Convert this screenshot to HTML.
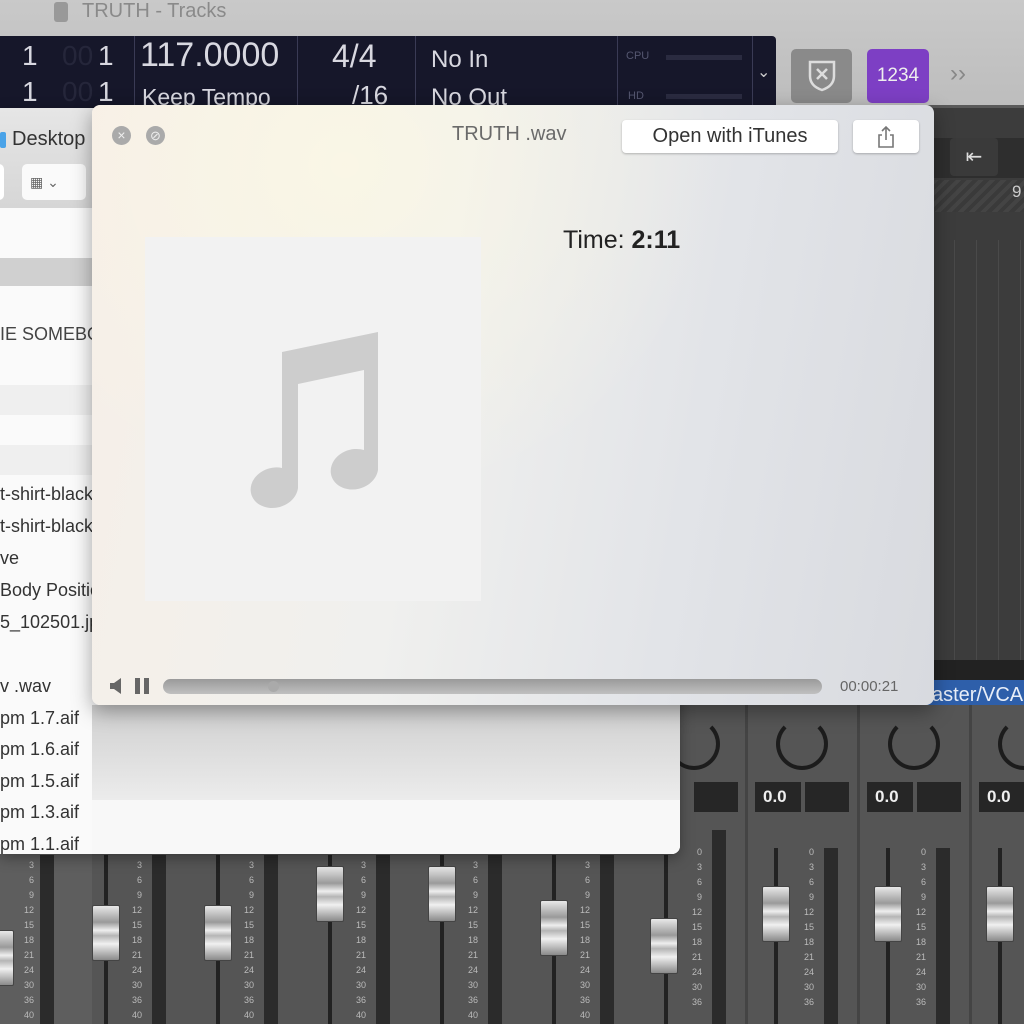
<!DOCTYPE html>
<html><head><style>
*{margin:0;padding:0;box-sizing:border-box}
html,body{width:1024px;height:1024px;overflow:hidden}
body{position:relative;background:#5a5a5a;font-family:"Liberation Sans",sans-serif}
.a{position:absolute}
.strip{position:absolute;top:700px;width:112px;height:324px;background:#5e5e5e}
.dv{position:absolute;top:0;width:14px;height:170px;background:#2b2b2b}
.trk{position:absolute;top:150px;width:4px;height:180px;background:#222}
.cap{position:absolute;width:28px;height:56px;border-radius:2px;background:linear-gradient(#e8e8e8,#9a9a9a 30%,#eee 45%,#b5b5b5 55%,#f0f0f0 70%,#8a8a8a);border:1px solid #444}
.sc{position:absolute;font-size:9px;color:#bbb;line-height:15px;width:14px;text-align:right}
.knob{position:absolute;top:718px;width:52px;height:52px;border-radius:50%;border:4px solid #1c1c1c;border-top-color:transparent;background:#555}
.val{position:absolute;top:782px;width:46px;height:30px;background:#262626;color:#eee;font-size:17px;font-weight:bold;line-height:30px;padding-left:8px}
.valb{position:absolute;top:782px;width:44px;height:30px;background:#262626}
.row{position:absolute;left:0;width:95px;font-size:18px;color:#333;white-space:nowrap;overflow:hidden}
</style></head><body>
<div class="a" style="left:0;top:0;width:1024px;height:105px;background:linear-gradient(#c9c9c9,#bdbdbd)"></div>
<div class="a" style="left:54px;top:2px;width:14px;height:20px;background:#999;border-radius:3px"></div>
<div class="a" style="left:82px;top:0;font-size:20px;color:#8a8a8a">TRUTH - Tracks</div>
<div class="a" style="left:0;top:36px;width:776px;height:72px;background:#16172a;border-radius:0 4px 0 0"></div>
<div class="a" style="left:0;top:36px;width:135px;height:72px;color:#d8d8e0;font-size:28px">
 <div class="a" style="left:22px;top:4px">1</div><div class="a" style="left:98px;top:4px">1</div>
 <div class="a" style="left:22px;top:40px">1</div><div class="a" style="left:98px;top:40px">1</div>
 <div class="a" style="left:62px;top:4px;color:#25263a">00</div><div class="a" style="left:62px;top:40px;color:#25263a">00</div>
</div>
<div class="a" style="left:134px;top:36px;width:1px;height:72px;background:#3a3b55"></div>
<div class="a" style="left:140px;top:36px;font-size:34px;color:#d8d8e0">117.0000</div>
<div class="a" style="left:142px;top:84px;font-size:23px;color:#d8d8e0">Keep Tempo</div>
<div class="a" style="left:297px;top:36px;width:1px;height:72px;background:#3a3b55"></div>
<div class="a" style="left:332px;top:38px;font-size:32px;color:#d8d8e0">4/4</div>
<div class="a" style="left:352px;top:80px;font-size:26px;color:#d8d8e0">/16</div>
<div class="a" style="left:415px;top:36px;width:1px;height:72px;background:#3a3b55"></div>
<div class="a" style="left:431px;top:46px;font-size:24px;color:#d8d8e0">No In</div>
<div class="a" style="left:431px;top:84px;font-size:24px;color:#d8d8e0">No Out</div>
<div class="a" style="left:617px;top:36px;width:1px;height:72px;background:#3a3b55"></div>
<div class="a" style="left:626px;top:50px;font-size:11px;color:#555770">CPU</div>
<div class="a" style="left:628px;top:90px;font-size:11px;color:#555770">HD</div>
<div class="a" style="left:666px;top:55px;width:76px;height:5px;background:#2a2b40"></div>
<div class="a" style="left:666px;top:94px;width:76px;height:5px;background:#2a2b40"></div>
<div class="a" style="left:752px;top:36px;width:1px;height:72px;background:#3a3b55"></div>
<div class="a" style="left:757px;top:62px;font-size:16px;color:#ccc">&#8964;</div>
<div class="a" style="left:791px;top:49px;width:61px;height:54px;background:#8a8a8a;border-radius:5px"></div>
<svg class="a" style="left:806px;top:58px" width="32" height="34"><path d="M4 4 H28 V18 Q28 28 16 32 Q4 28 4 18 Z" fill="none" stroke="#ddd" stroke-width="2.5"/><path d="M11 11 L21 21 M21 11 L11 21" stroke="#ddd" stroke-width="2.5"/></svg>
<div class="a" style="left:867px;top:49px;width:62px;height:54px;background:#7d3fc4;border-radius:5px;color:#eee;font-size:19px;text-align:center;line-height:54px">1234</div>
<div class="a" style="left:950px;top:60px;font-size:24px;color:#888">&rsaquo;&rsaquo;</div>
<div class="a" style="left:933px;top:108px;width:91px;height:555px;background:#3c3c3c"></div>
<div class="a" style="left:933px;top:138px;width:91px;height:40px;background:#2e2e2e"></div>
<div class="a" style="left:950px;top:138px;width:48px;height:38px;background:#3a3a3a;border-radius:4px;color:#ddd;font-size:20px;text-align:center;line-height:38px">&#8676;</div>
<div class="a" style="left:933px;top:180px;width:91px;height:32px;background:repeating-linear-gradient(135deg,#444 0 4px,#3a3a3a 4px 8px)"></div>
<div class="a" style="left:1012px;top:182px;font-size:17px;color:#ccc">9</div>
<div class="a" style="left:933px;top:240px;width:91px;height:420px;background:repeating-linear-gradient(90deg,#3c3c3c 0 21px,#4a4a4a 21px 22px)"></div>
<div class="a" style="left:933px;top:660px;width:91px;height:50px;background:#222"></div>
<div class="a" style="left:920px;top:680px;width:104px;height:30px;background:#2e5faa;color:#e8eef8;font-size:20px;line-height:30px;padding-left:12px">aster/VCA</div>
<div class="a" style="left:0;top:705px;width:1024px;height:319px;background:#555"></div>
<div class="strip" style="left:-20px"></div>
<div class="dv" style="left:40px;top:855px"></div><div class="dv" style="left:152px;top:855px"></div><div class="dv" style="left:264px;top:855px"></div><div class="dv" style="left:376px;top:855px"></div><div class="dv" style="left:488px;top:855px"></div><div class="dv" style="left:600px;top:855px"></div>
<div class="a" style="left:712px;top:830px;width:14px;height:194px;background:#2b2b2b"></div>
<div class="a" style="left:824px;top:848px;width:14px;height:176px;background:#2b2b2b"></div>
<div class="a" style="left:936px;top:848px;width:14px;height:176px;background:#2b2b2b"></div>
<div class="a" style="left:745px;top:705px;width:3px;height:319px;background:#444"></div>
<div class="a" style="left:857px;top:705px;width:3px;height:319px;background:#444"></div>
<div class="a" style="left:969px;top:705px;width:3px;height:319px;background:#444"></div>
<div class="trk" style="left:104px;top:855px;height:169px"></div><div class="trk" style="left:216px;top:855px;height:169px"></div><div class="trk" style="left:328px;top:855px;height:169px"></div><div class="trk" style="left:440px;top:855px;height:169px"></div><div class="trk" style="left:552px;top:855px;height:169px"></div><div class="trk" style="left:664px;top:855px;height:169px"></div><div class="trk" style="left:774px;top:848px;height:176px"></div><div class="trk" style="left:886px;top:848px;height:176px"></div><div class="trk" style="left:998px;top:848px;height:176px"></div>
<div class="sc" style="left:128px;top:858px">3<br>6<br>9<br>12<br>15<br>18<br>21<br>24<br>30<br>36<br>40</div>
<div class="sc" style="left:240px;top:858px">3<br>6<br>9<br>12<br>15<br>18<br>21<br>24<br>30<br>36<br>40</div>
<div class="sc" style="left:352px;top:858px">3<br>6<br>9<br>12<br>15<br>18<br>21<br>24<br>30<br>36<br>40</div>
<div class="sc" style="left:464px;top:858px">3<br>6<br>9<br>12<br>15<br>18<br>21<br>24<br>30<br>36<br>40</div>
<div class="sc" style="left:576px;top:858px">3<br>6<br>9<br>12<br>15<br>18<br>21<br>24<br>30<br>36<br>40</div>
<div class="sc" style="left:20px;top:858px">3<br>6<br>9<br>12<br>15<br>18<br>21<br>24<br>30<br>36<br>40</div>
<div class="sc" style="left:688px;top:845px">0<br>3<br>6<br>9<br>12<br>15<br>18<br>21<br>24<br>30<br>36</div>
<div class="sc" style="left:800px;top:845px">0<br>3<br>6<br>9<br>12<br>15<br>18<br>21<br>24<br>30<br>36</div>
<div class="sc" style="left:912px;top:845px">0<br>3<br>6<br>9<br>12<br>15<br>18<br>21<br>24<br>30<br>36</div>
<div class="cap" style="left:-14px;top:930px"></div>
<div class="cap" style="left:92px;top:905px"></div><div class="cap" style="left:204px;top:905px"></div><div class="cap" style="left:316px;top:866px"></div><div class="cap" style="left:428px;top:866px"></div><div class="cap" style="left:540px;top:900px"></div><div class="cap" style="left:650px;top:918px"></div><div class="cap" style="left:762px;top:886px"></div><div class="cap" style="left:874px;top:886px"></div><div class="cap" style="left:986px;top:886px"></div>
<div class="knob" style="left:668px"></div><div class="knob" style="left:776px"></div><div class="knob" style="left:888px"></div><div class="knob" style="left:998px"></div>
<div class="valb" style="left:694px"></div>
<div class="val" style="left:755px">0.0</div><div class="valb" style="left:805px"></div>
<div class="val" style="left:867px">0.0</div><div class="valb" style="left:917px"></div>
<div class="val" style="left:979px">0.0</div>
<div class="a" style="left:0;top:108px;width:680px;height:746px;background:#fafafa;border-radius:0 0 8px 0;box-shadow:0 4px 14px rgba(0,0,0,.35)"></div>
<div class="a" style="left:0;top:108px;width:680px;height:100px;background:linear-gradient(#e6e6e6,#d6d6d6)"></div>
<div class="a" style="left:0;top:132px;width:6px;height:16px;background:#4aa3e8;border-radius:2px"></div>
<div class="a" style="left:12px;top:128px;font-size:20px;color:#333">Desktop</div>
<div class="a" style="left:-10px;top:164px;width:14px;height:36px;background:#fff;border-radius:5px"></div>
<div class="a" style="left:22px;top:164px;width:64px;height:36px;background:#fafafa;border-radius:5px;font-size:14px;color:#666;line-height:36px;padding-left:8px">&#9638; &#8964;</div>
<div class="a" style="left:0;top:258px;width:95px;height:28px;background:#d0d0d0"></div>
<div class="a" style="left:0;top:385px;width:95px;height:30px;background:#efefef"></div>
<div class="a" style="left:0;top:445px;width:95px;height:30px;background:#efefef"></div>
<div class="row" style="top:324px;color:#444">IE SOMEBODY</div>
<div class="row" style="top:484px">t-shirt-black</div>
<div class="row" style="top:516px">t-shirt-black</div>
<div class="row" style="top:548px">ve</div>
<div class="row" style="top:580px">Body Position</div>
<div class="row" style="top:612px">5_102501.jpg</div>
<div class="row" style="top:676px">v .wav</div>
<div class="row" style="top:708px;width:200px">pm 1.7.aif</div>
<div class="row" style="top:739px;width:200px">pm 1.6.aif</div>
<div class="row" style="top:771px;width:200px">pm 1.5.aif</div>
<div class="row" style="top:802px;width:200px">pm 1.3.aif</div>
<div class="row" style="top:834px;width:200px">pm 1.1.aif</div>
<div class="a" style="left:92px;top:705px;width:588px;height:95px;background:linear-gradient(#cfcfcf,#ececec)"></div>
<div class="a" style="left:92px;top:800px;width:588px;height:54px;background:#f8f8f8;border-radius:0 0 8px 0"></div>
<div class="a" style="left:92px;top:105px;width:842px;height:600px;border-radius:8px;background:linear-gradient(100deg,#f6eee8 0%,#f4f0ea 15%,#f0f0ee 40%,#e2e4e8 70%,#d8dadf 100%);box-shadow:0 6px 20px rgba(0,0,0,.35);overflow:hidden">
 <div class="a" style="left:0;top:0;width:842px;height:600px;background:radial-gradient(ellipse at 30% 10%,rgba(255,250,225,.6),transparent 45%)"></div>
 <div class="a" style="left:20px;top:21px;width:19px;height:19px;border-radius:50%;background:#aaa;color:#eee;font-size:14px;text-align:center;line-height:19px">&times;</div>
 <div class="a" style="left:54px;top:21px;width:19px;height:19px;border-radius:50%;background:#aaa;color:#eee;font-size:13px;text-align:center;line-height:19px">&#8856;</div>
 <div class="a" style="left:360px;top:18px;font-size:20px;color:#6a6a6a">TRUTH .wav</div>
 <div class="a" style="left:530px;top:15px;width:216px;height:33px;background:#fff;border-radius:4px;box-shadow:0 1px 2px rgba(0,0,0,.25);font-size:20px;color:#333;text-align:center;line-height:33px">Open with iTunes</div>
 <div class="a" style="left:761px;top:15px;width:66px;height:33px;background:#fff;border-radius:4px;box-shadow:0 1px 2px rgba(0,0,0,.25)"></div>
 <svg class="a" style="left:784px;top:19px" width="20" height="26"><path d="M10 3 V16 M6 7 L10 3 L14 7 M6 11 H3 V23 H17 V11 H14" fill="none" stroke="#777" stroke-width="1.6"/></svg>
 <div class="a" style="left:471px;top:121px;font-size:25px;color:#222">Time: <b>2:11</b></div>
 <div class="a" style="left:53px;top:132px;width:336px;height:364px;background:#f2f2f2"></div>
 <svg class="a" style="left:150px;top:225px" width="145" height="185"><path d="M40 22 L136 2 V140 A24 20 -15 1 1 122 120 V40 L56 54 V158 A24 20 -15 1 1 40 138 Z" fill="#cdcdcd"/></svg>
 <svg class="a" style="left:16px;top:572px" width="16" height="18"><path d="M2 6 H6 L13 1 V17 L6 12 H2 Z" fill="#666"/></svg>
 <div class="a" style="left:43px;top:573px;width:5px;height:16px;background:#666"></div><div class="a" style="left:52px;top:573px;width:5px;height:16px;background:#666"></div>
 <div class="a" style="left:71px;top:574px;width:659px;height:15px;border-radius:8px;background:linear-gradient(#9a9a9a,#c0c0c0)"></div>
 <div class="a" style="left:176px;top:576px;width:11px;height:11px;border-radius:50%;background:#aaa"></div>
 <div class="a" style="left:748px;top:573px;font-size:15px;color:#666">00:00:21</div>
</div>
</body></html>
